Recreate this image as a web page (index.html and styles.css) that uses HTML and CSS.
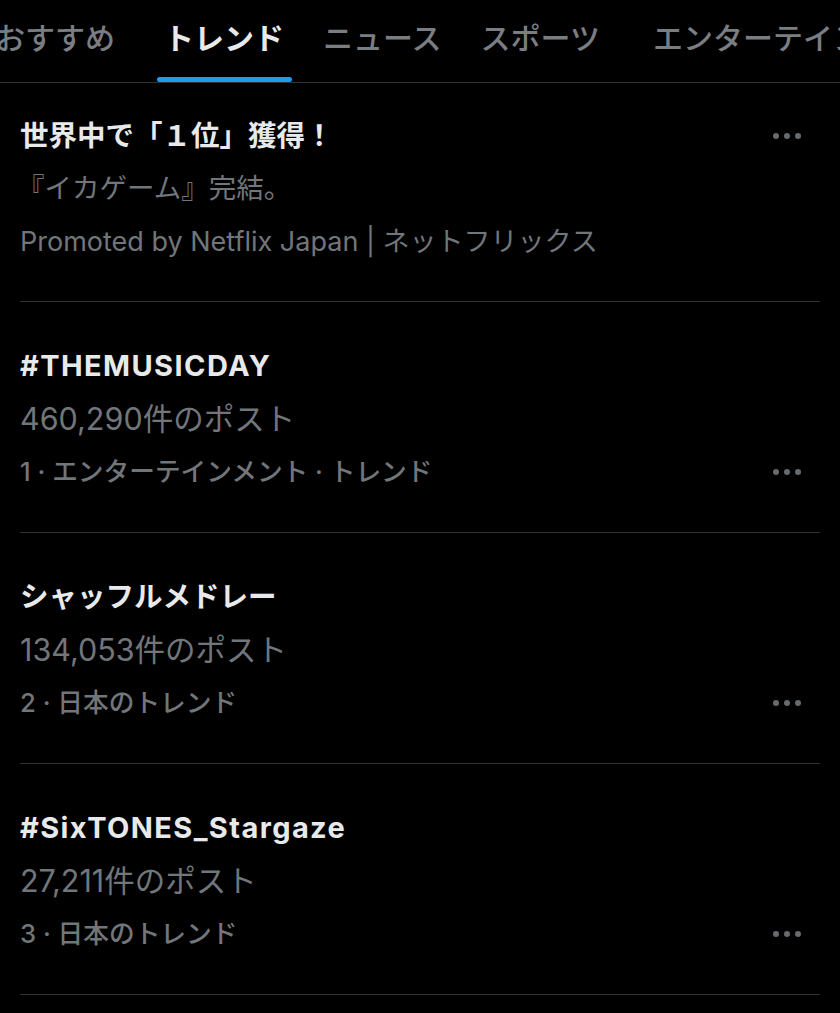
FILE: index.html
```html
<!DOCTYPE html>
<html lang="ja">
<head>
<meta charset="utf-8">
<link rel="stylesheet" href="styles.css">
</head>
<body>
<nav class="tabs">
  <div class="tab"><span class="tab-label">おすすめ</span></div>
  <div class="tab active"><span class="tab-label">トレンド</span><span class="tab-bar"></span></div>
  <div class="tab"><span class="tab-label">ニュース</span></div>
  <div class="tab"><span class="tab-label">スポーツ</span></div>
  <div class="tab"><span class="tab-label">エンターテインメント</span></div>
</nav>
<main class="list">
  <section class="trend promo">
    <div class="trend-body">
      <div class="title">世界中で「１位」獲得！</div>
      <div class="sub">『イカゲーム』完結。</div>
      <div class="promo-by">Promoted by Netflix Japan | ネットフリックス</div>
    </div>
    <div class="more top"><i></i><i></i><i></i></div>
  </section>
  <section class="trend">
    <div class="trend-body">
      <div class="title en">#THEMUSICDAY</div>
      <div class="count">460,290件のポスト</div>
      <div class="meta">1 · エンターテインメント · トレンド</div>
    </div>
    <div class="more"><i></i><i></i><i></i></div>
  </section>
  <section class="trend">
    <div class="trend-body">
      <div class="title">シャッフルメドレー</div>
      <div class="count">134,053件のポスト</div>
      <div class="meta">2 · 日本のトレンド</div>
    </div>
    <div class="more"><i></i><i></i><i></i></div>
  </section>
  <section class="trend">
    <div class="trend-body">
      <div class="title en">#SixTONES_Stargaze</div>
      <div class="count">27,211件のポスト</div>
      <div class="meta">3 · 日本のトレンド</div>
    </div>
    <div class="more"><i></i><i></i><i></i></div>
  </section>
</main>
</body>
</html>
```
FILE: styles.css
```css
html, body {
  margin: 0;
  padding: 0;
  background: #000;
}
body {
  font-family: "Inter", "Noto Sans CJK JP", sans-serif;
  color: #e7e9ea;
  overflow: hidden;
}
.tabs {
  display: flex;
  gap: 39px;
  height: 82px;
  border-bottom: 1px solid #2f3336;
  margin-left: -5px;
  white-space: nowrap;
  overflow: hidden;
}
.tab {
  display: flex;
  flex-direction: column;
  align-items: center;
  padding-top: 18px;
  flex: none;
  color: #7a7e82;
  font-family: "Noto Sans CJK JP", sans-serif;
  font-size: 30px;
  font-weight: 500;
}
.tab:first-child {
  margin-right: 10px;
}
.tab:last-child {
  margin-left: 14px;
}
.tab-label {
  line-height: 36px;
}
.tab.active {
  color: #e7e9ea;
  font-weight: 700;
}
.tab-bar {
  margin-top: auto;
  align-self: stretch;
  margin-left: -7px;
  margin-right: -8px;
  height: 5px;
  border-radius: 3px;
  background: #1d9bf0;
}
.list {
  display: flex;
  flex-direction: column;
}
.trend {
  display: flex;
  justify-content: space-between;
  margin: 0 20px;
  padding: 37px 0 34px;
  border-bottom: 1px solid #2f3336;
}
.trend.promo {
  padding: 26px 0 33px;
}
.trend-body > div {
  line-height: 53px;
  height: 53px;
  white-space: nowrap;
}
.title {
  font-size: 28.5px;
  font-weight: 700;
  color: #e7e9ea;
}
.title.en {
  font-size: 29px;
  letter-spacing: 1.4px;
}
.sub {
  font-size: 27.5px;
  color: #71767b;
  margin-left: -3px;
}
.promo-by {
  font-size: 27px;
  color: #71767b;
}
.count {
  font-size: 30.5px;
  color: #71767b;
}
.meta {
  font-size: 25.7px;
  font-weight: 500;
  color: #71767b;
}
.more {
  display: flex;
  gap: 5px;
  align-self: flex-end;
  height: 53px;
  align-items: center;
  margin-right: 19px;
}
.more.top {
  align-self: flex-start;
}
.more i {
  width: 6px;
  height: 6px;
  border-radius: 50%;
  background: #676b6f;
}
```
